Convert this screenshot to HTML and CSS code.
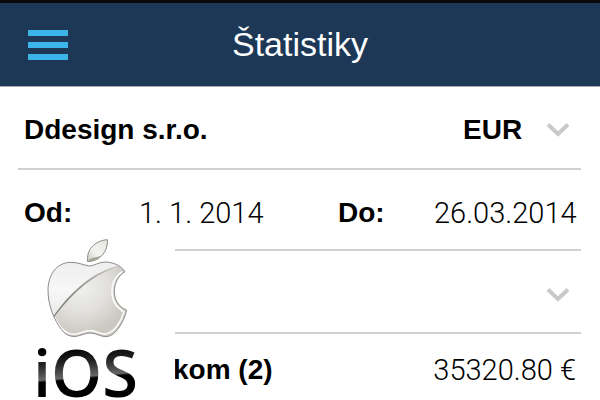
FILE: index.html
```html
<!DOCTYPE html>
<html lang="sk">
<head>
<meta charset="utf-8">
<meta name="viewport" content="width=device-width, initial-scale=1">
<title>Štatistiky</title>
<link rel="stylesheet" href="styles.css">
</head>
<body>
<header class="bar">
  <button class="menu" type="button" aria-label="Menu"><span></span><span></span><span></span></button>
  <h1 class="title">Štatistiky</h1>
</header>
<main class="content">
  <div class="row company">
    <label class="name" for="currency">Ddesign s.r.o.</label>
    <div class="picker currency">
      <select id="currency"><option>EUR</option></select>
      <svg class="chevron" viewBox="0 0 24 16" aria-hidden="true"><path d="M2 2.500 12 12 22 2.500"/></svg>
    </div>
  </div>
  <div class="row period">
    <label class="name" for="from">Od:</label>
    <input class="value" id="from" type="text" value="1. 1. 2014">
    <label class="name" for="to">Do:</label>
    <input class="value" id="to" type="text" value="26.03.2014">
  </div>
  <div class="row">
    <div class="picker filter">
      <select aria-label="Filter"><option></option></select>
      <svg class="chevron" viewBox="0 0 24 16" aria-hidden="true"><path d="M2 2.500 12 12 22 2.500"/></svg>
    </div>
  </div>
  <div class="row total">
    <span class="name">kom (2)</span>
    <span class="value">35320.80 €</span>
  </div>
</main>
<aside class="badge">
  <svg class="apple" viewBox="75 20 255 309" aria-hidden="true">
    <defs>
      <radialGradient id="body" gradientUnits="userSpaceOnUse" cx="180" cy="165" r="165">
        <stop offset="0" stop-color="#f1f1f0"/><stop offset="0.500" stop-color="#e1e0dc"/><stop offset="0.900" stop-color="#cbc8c1"/>
      </radialGradient>
      <linearGradient id="shine" x1="0" y1="0" x2="0" y2="1">
        <stop offset="0" stop-color="#eeeeee"/><stop offset="0.500" stop-color="#f7f7f7"/><stop offset="1" stop-color="#e8e8e7"/>
      </linearGradient>
      <linearGradient id="leaf" x1="1" y1="0" x2="0" y2="1">
        <stop offset="0" stop-color="#e6e6e0"/><stop offset="0.600" stop-color="#f3f4f0"/><stop offset="1" stop-color="#c4c6ba"/>
      </linearGradient>
      <linearGradient id="seam" x1="0" y1="1" x2="1" y2="0">
        <stop offset="0" stop-color="#6d6b67"/><stop offset="1" stop-color="#c5c3bf"/>
      </linearGradient>
      <clipPath id="shape"><path d="M208 107C190 104 172 95 150 96C108 98 84 135 84 180C84 225 102 268 124 297C137 314 151 320 169 318C183 316 193 308 211 308C229 308 240 319 258 319C274 318 286 307 296 293C307 277 315 260 320 240C296 229 283 210 283 183C283 158 295 136 315 124C300 103 278 96 256 95C236 95 222 107 208 107Z"/></clipPath>
    </defs>
    <g clip-path="url(#shape)">
      <rect x="80" y="90" width="245" height="235" fill="url(#body)"/>
      <path d="M80 90H320L300 106C220 120 155 180 102 256L80 270Z" fill="url(#shine)"/>
      <path d="M100 259C153 183 220 122 302 106C228 126 161 182 103 258Z" fill="url(#seam)" stroke="url(#seam)"/>
    </g>
    <path class="inner" d="M104 261C119 292 141 316 169 311C184 308 195 301 211 301C229 301 242 313 257 311C285 306 304 272 312 245C289 232 276 210 276 183C276 158 287 137 306 124"/>
    <path class="rim" d="M208 107C190 104 172 95 150 96C108 98 84 135 84 180C84 225 102 268 124 297C137 314 151 320 169 318C183 316 193 308 211 308C229 308 240 319 258 319C274 318 286 307 296 293C307 277 315 260 320 240C296 229 283 210 283 183C283 158 295 136 315 124C300 103 278 96 256 95C236 95 222 107 208 107Z"/>
    <path class="rim leaf" d="M203 94C198 59 224 31 262 28C265 62 241 93 203 94Z"/>
    <path d="M207 89C215 78 235 84 245 73C235 88 222 92 207 93Z" fill="#a4a798"/>
  </svg>
  <span class="ios">iOS</span>
</aside>
</body>
</html>
```

FILE: styles.css
```css
* {
  box-sizing: border-box;
}

body {
  margin: 0;
  position: relative;
  background: #fff;
  color: #000;
  font-family: "Liberation Sans", Arial, sans-serif;
  font-size: 28px;
}

.bar {
  display: grid;
  grid-template-columns: 68px 1fr 68px;
  align-items: center;
  height: 87px;
  border-top: 3px solid #0a0a0a;
  border-bottom: 1px solid #a9adb2;
  background: #1c3856;
}

.menu {
  display: grid;
  gap: 6px;
  width: 40px;
  margin: 0 0 0 28px;
  padding: 0;
  border: 0;
  background: none;
}

.menu span {
  height: 6px;
  background: #3bb5ea;
}

.title {
  margin: 0;
  padding-bottom: 2px;
  color: #fff;
  font-size: 34px;
  font-weight: 400;
  line-height: 38px;
  text-align: center;
}

.content {
  padding: 0 19px 0 18px;
}

.row {
  display: flex;
  align-items: center;
  height: 83px;
  padding: 6px 0 0 6px;
  border-bottom: 2px solid #d0d0d0;
}

.company {
  padding-top: 4px;
  justify-content: space-between;
}

.period {
  display: grid;
  grid-template-columns: 115px 1fr 96px 147px;
  height: 81px;
}

.name {
  font-weight: 700;
}

.value {
  font-family: Roboto, "Liberation Sans", sans-serif;
  font-size: 29px;
  font-weight: 300;
}

input,
select {
  min-width: 0;
  width: 100%;
  margin: 0;
  padding: 0;
  border: 0;
  background: none;
  color: inherit;
}

select {
  appearance: none;
  font: 700 28px "Liberation Sans", Arial, sans-serif;
}

.picker {
  display: grid;
  align-items: center;
  flex: 1;
}

.currency {
  flex: none;
  width: 118px;
}

.picker > * {
  grid-area: 1 / 1;
}

.chevron {
  justify-self: end;
  width: 24px;
  height: 16px;
  margin-right: 11px;
  fill: none;
  stroke: #c9c9c9;
  stroke-width: 4;
  pointer-events: none;
}

.total {
  justify-content: space-between;
  height: 67px;
  padding: 4px 5px 0 155px;
  border: 0;
}

.badge {
  position: absolute;
  top: 237px;
  left: 0;
  display: flex;
  flex-direction: column;
  align-items: center;
  width: 175px;
  background: #fff;
}

.apple {
  width: 85px;
  height: 103px;
}

.rim {
  fill: none;
  stroke: #8b8b88;
  stroke-width: 3;
}

.leaf {
  fill: url(#leaf);
}

.inner {
  fill: none;
  stroke: #fafafa;
  stroke-width: 5;
}

.ios {
  margin-right: 4px;
  background: linear-gradient(175deg, #000 15%, #222 35%, #666 56%, #000 59%);
  background-clip: text;
  color: transparent;
  font-family: "Open Sans", "Noto Sans", sans-serif;
  font-size: 65px;
  font-weight: 600;
  line-height: 64px;
}
```
